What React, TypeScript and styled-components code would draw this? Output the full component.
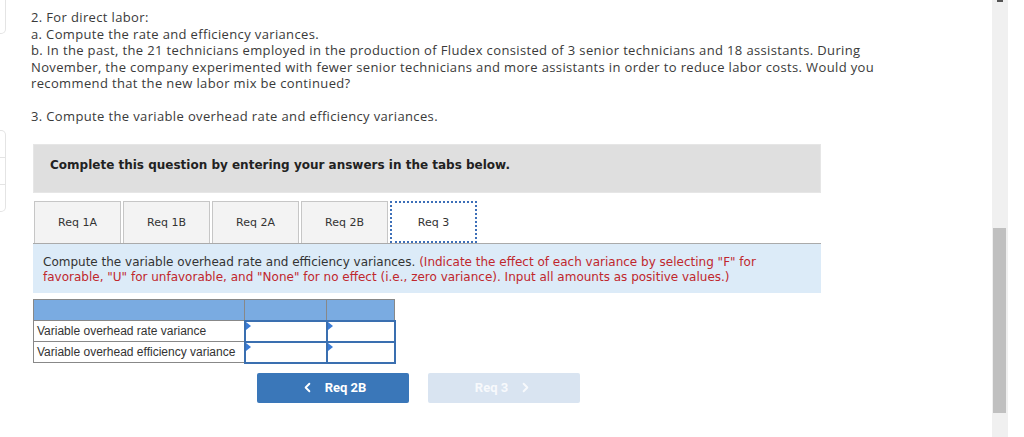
import React from 'react';
import styled, { createGlobalStyle } from 'styled-components';
import { ChevronLeft, ChevronRight } from 'lucide-react';

const GlobalStyle = createGlobalStyle`
  html, body {
    margin: 0;
    padding: 0;
    background: #fff;
    overflow: hidden;
  }
  * {
    box-sizing: border-box;
  }
`;

const Page = styled.div`
  position: relative;
  width: 1024px;
  height: 437px;
  display: flex;
  overflow: hidden;
`;

const SideRail = styled.div`
  width: 31px;
  flex-shrink: 0;
  display: flex;
  flex-direction: column;
`;

const RailCard = styled.div<{ $height: number; $top: number }>`
  width: 6px;
  height: ${(p) => p.$height}px;
  margin-top: ${(p) => p.$top}px;
  border: 1px solid #e4e4e4;
  border-left: none;
  border-radius: 0 5px 5px 0;
  display: flex;
  flex-direction: column;
`;

const RailDivider = styled.div`
  flex: 1;
  border-bottom: 1px solid #e4e4e4;
  &:last-child {
    border-bottom: none;
  }
`;

const Main = styled.div`
  flex: 1;
  padding-top: 9px;
`;

const Question = styled.p`
  margin: 0;
  font-family: 'Open Sans', 'Liberation Sans', sans-serif;
  font-size: 13px;
  letter-spacing: 0.36px;
  line-height: 16.5px;
  color: #3a3a3a;
  white-space: nowrap;
`;

const QuestionGap = styled.div`
  height: 16px;
`;

const Workspace = styled.div`
  width: 788px;
  margin-left: 2px;
  margin-top: 20px;
`;

const Banner = styled.div`
  height: 49px;
  background: #dfdfdf;
  border: 1px solid #e6e6e6;
  padding: 13px 0 0 16px;
  font-family: 'DejaVu Sans', Verdana, sans-serif;
  font-weight: bold;
  font-size: 12px;
  color: #222;
`;

const TabRow = styled.div`
  display: flex;
  gap: 2px;
  margin-top: 8px;
  padding-left: 1px;
  border-bottom: 1px solid #aaa;
`;

const Tab = styled.div<{ $active?: boolean }>`
  width: 87px;
  height: 42px;
  display: flex;
  align-items: center;
  justify-content: center;
  background: ${(p) => (p.$active ? '#fff' : '#f3f3f3')};
  border: ${(p) => (p.$active ? '2px dotted #3d6fb8' : '1px solid #c6c6c6')};
  border-bottom: ${(p) => (p.$active ? '2px dotted #3d6fb8' : 'none')};
  font-family: 'DejaVu Sans', Verdana, sans-serif;
  font-size: 11px;
  color: #333;
  margin-bottom: ${(p) => (p.$active ? '-1px' : '0')};
`;

const InfoBox = styled.div`
  background: #dcebf8;
  padding: 11px 10px 8px 10px;
  font-family: 'DejaVu Sans', Verdana, sans-serif;
  font-size: 12px;
  line-height: 15px;
  color: #333;
`;

const Red = styled.span`
  color: #c0272d;
`;

const Grid = styled.table`
  margin-top: 6px;
  border-collapse: collapse;
  font-family: 'Liberation Sans', Arial, sans-serif;
  font-size: 12px;
  color: #333;
`;

const HeadCell = styled.td<{ $w: number }>`
  width: ${(p) => p.$w}px;
  height: 21px;
  background: #7aabe1;
  border: 1px solid #888;
  padding: 0;
`;

const LabelCell = styled.td`
  height: 21px;
  border: 1px solid #888;
  padding: 0 3px;
  white-space: nowrap;
`;

const InputCell = styled.td`
  position: relative;
  height: 21px;
  border: 2px solid #3a6fb0;
  padding: 0;
  background: #fff;
`;

const Marker = styled.span`
  position: absolute;
  top: 0;
  left: 0;
  width: 0;
  height: 0;
  border-top: 4px solid transparent;
  border-bottom: 4px solid transparent;
  border-left: 5px solid #3a7bd5;
`;

const NavRow = styled.div`
  display: flex;
  gap: 19px;
  margin-top: 9px;
  padding-left: 224px;
`;

const NavButton = styled.div<{ $disabled?: boolean }>`
  width: 152px;
  height: 30px;
  border-radius: 2px;
  display: flex;
  align-items: center;
  justify-content: center;
  gap: 10px;
  background: ${(p) => (p.$disabled ? '#d9e4f1' : '#3a77b9')};
  color: ${(p) => (p.$disabled ? '#f7f9fc' : '#fff')};
  font-family: 'Roboto', 'Liberation Sans', sans-serif;
  font-weight: bold;
  font-size: 13px;
`;

const ScrollTrack = styled.div`
  position: absolute;
  top: 0;
  left: 992px;
  width: 16px;
  height: 437px;
  background: #f0f0f0;
`;

const ScrollThumb = styled.div`
  position: absolute;
  top: 228px;
  left: 1px;
  width: 13px;
  height: 185px;
  background: #c0c0c0;
`;

const ScrollArrow = styled.div`
  position: absolute;
  top: 0;
  left: 5px;
  width: 6px;
  height: 2px;
  background: #555;
`;

const tabs = ['Req 1A', 'Req 1B', 'Req 2A', 'Req 2B', 'Req 3'];

const rows = ['Variable overhead rate variance', 'Variable overhead efficiency variance'];

const App: React.FC = () => {
  return (
    <Page>
      <GlobalStyle />
      <SideRail>
        <RailCard $height={42} $top={-8} />
        <RailCard $height={82} $top={96}>
          <RailDivider />
          <RailDivider />
          <RailDivider />
        </RailCard>
      </SideRail>
      <Main>
        <Question>
          2. For direct labor:
          <br />
          a. Compute the rate and efficiency variances.
          <br />
          b. In the past, the 21 technicians employed in the production of Fludex consisted of 3 senior technicians and 18 assistants. During
          <br />
          November, the company experimented with fewer senior technicians and more assistants in order to reduce labor costs. Would you
          <br />
          recommend that the new labor mix be continued?
        </Question>
        <QuestionGap />
        <Question>3. Compute the variable overhead rate and efficiency variances.</Question>

        <Workspace>
          <Banner>Complete this question by entering your answers in the tabs below.</Banner>
          <TabRow>
            {tabs.map((t) => (
              <Tab key={t} $active={t === 'Req 3'}>
                {t}
              </Tab>
            ))}
          </TabRow>
          <InfoBox>
            Compute the variable overhead rate and efficiency variances.{' '}
            <Red>
              (Indicate the effect of each variance by selecting "F" for
              <br />
              favorable, "U" for unfavorable, and "None" for no effect (i.e., zero variance). Input all amounts as positive values.)
            </Red>
          </InfoBox>
          <Grid>
            <tbody>
              <tr>
                <HeadCell $w={211} />
                <HeadCell $w={82} />
                <HeadCell $w={68} />
              </tr>
              {rows.map((r) => (
                <tr key={r}>
                  <LabelCell>{r}</LabelCell>
                  <InputCell>
                    <Marker />
                  </InputCell>
                  <InputCell>
                    <Marker />
                  </InputCell>
                </tr>
              ))}
            </tbody>
          </Grid>
          <NavRow>
            <NavButton>
              <ChevronLeft size={15} strokeWidth={3} />
              Req 2B
            </NavButton>
            <NavButton $disabled>
              Req 3
              <ChevronRight size={15} strokeWidth={3} />
            </NavButton>
          </NavRow>
        </Workspace>
      </Main>
      <ScrollTrack>
        <ScrollArrow />
        <ScrollThumb />
      </ScrollTrack>
    </Page>
  );
};

export default App;
